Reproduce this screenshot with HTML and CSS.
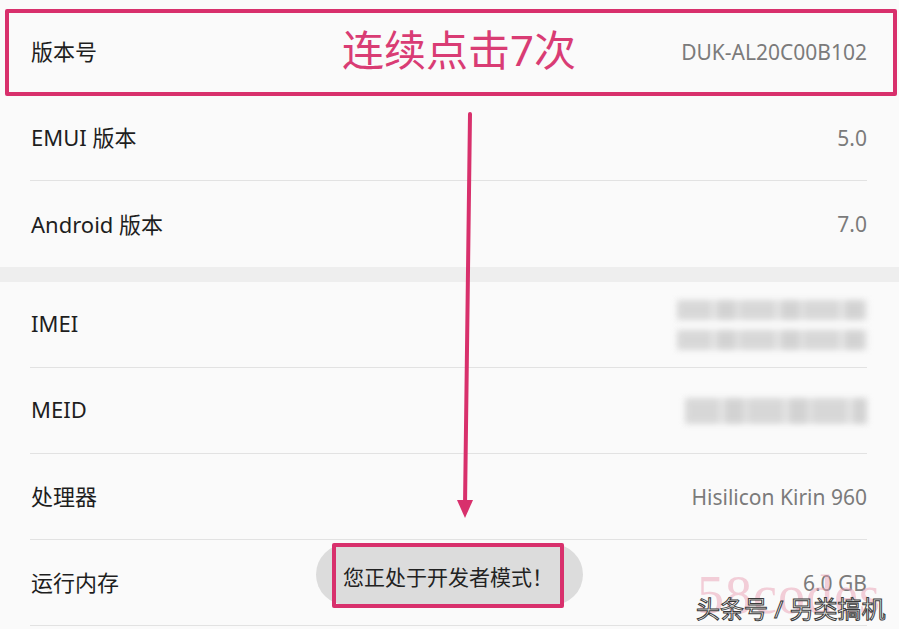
FILE: index.html
```html
<!DOCTYPE html>
<html lang="zh-CN">
<head>
  <meta charset="UTF-8">
  <meta name="viewport" content="width=device-width, initial-scale=1">
  <title>关于手机</title>
  <link rel="stylesheet" href="styles.css">
</head>

<body>
  <div class="page">
    <div class="group first">
      <div class="row">
        <span class="label">版本号</span>
        <span class="value">DUK-AL20C00B102</span>
      </div>
      <div class="row">
        <span class="label">EMUI 版本</span>
        <span class="value">5.0</span>
      </div>
      <div class="row last">
        <span class="label">Android 版本</span>
        <span class="value">7.0</span>
      </div>
    </div>

    <div class="gap"></div>

    <div class="group">
      <div class="row">
        <span class="label">IMEI</span>
        <span class="masked">
          <span class="smudge wide"></span>
          <span class="smudge wide"></span>
        </span>
      </div>
      <div class="row">
        <span class="label">MEID</span>
        <span class="masked">
          <span class="smudge thick"></span>
        </span>
      </div>
      <div class="row">
        <span class="label">处理器</span>
        <span class="value">Hisilicon Kirin 960</span>
      </div>
      <div class="row">
        <span class="label">运行内存</span>
        <span class="value">6.0 GB</span>
      </div>
    </div>

    <!-- annotations drawn over the screenshot -->
    <div class="mark-box"></div>
    <div class="mark-title">连续点击7次</div>

    <svg class="arrow" width="30" height="420" viewBox="0 0 30 420">
      <line x1="18" y1="2" x2="13" y2="394" stroke="#d8306c" stroke-width="4" stroke-linecap="round"/>
      <polygon points="5,388 21,388 13,406" fill="#d8306c"/>
    </svg>

    <div class="toast">
      <div class="toast-mark">您正处于开发者模式！</div>
    </div>

    <div class="watermark">
      <span class="wm-back">58codes</span>
      <span class="wm-front">头条号 / 另类搞机</span>
    </div>
  </div>
</body>
</html>
```

FILE: styles.css
```css
body {
  margin: 0;
  background: #fafafa;
  font-family: "Noto Sans", "Noto Sans CJK SC", sans-serif;
}
.page {
  position: relative;
  width: 899px;
  height: 629px;
  overflow: hidden;
}
.group.first {
  padding-top: 9px;
}
.row {
  height: 85px;
  margin: 0 32px 0 30px;
  padding-left: 1px;
  display: flex;
  align-items: center;
  justify-content: space-between;
  border-bottom: 1px solid #e2e2e2;
}
.row.last {
  border-bottom: none;
  height: 86px;
}
.label {
  font-size: 22px;
  color: #1e1e1e;
  margin-bottom: 3px;
}
.value {
  font-size: 21px;
  color: #7b7b7b;
}
.gap {
  height: 15px;
  background: #eeeeee;
}
.masked {
  display: flex;
  flex-direction: column;
  align-items: flex-end;
  gap: 10px;
}
.smudge {
  display: block;
  width: 182px;
  height: 20px;
  background: repeating-linear-gradient(90deg, #d2d2d2 0 34px, #e2e2e2 34px 40px, #cccccc 40px 58px, #dcdcdc 58px 64px);
  filter: blur(3px);
  opacity: 0.85;
}
.smudge.wide {
  width: 190px;
}
.smudge.thick {
  height: 26px;
}
.mark-box {
  position: absolute;
  left: 5px;
  top: 9px;
  width: 884px;
  height: 79px;
  border: 4px solid #d8306c;
  border-radius: 2px;
}
.mark-title {
  position: absolute;
  left: 342px;
  top: 23px;
  font-size: 42px;
  line-height: 54px;
  color: #d93c74;
}
.arrow {
  position: absolute;
  left: 452px;
  top: 112px;
}
.toast {
  position: absolute;
  left: 316px;
  top: 544px;
  width: 267px;
  height: 61px;
  border-radius: 31px;
  background: #dcdcdc;
}
.toast-mark {
  position: absolute;
  left: 16px;
  top: -1px;
  width: 224px;
  height: 57px;
  border: 4px solid #d8306c;
  border-radius: 2px;
  display: flex;
  align-items: center;
  justify-content: center;
  font-size: 21px;
  color: #222222;
}
.watermark {
  position: absolute;
  left: 694px;
  top: 568px;
  width: 200px;
  height: 61px;
}
.wm-back {
  position: absolute;
  left: 3px;
  top: -4px;
  font-family: "Liberation Serif", serif;
  font-size: 54px;
  letter-spacing: 1px;
  color: rgba(233, 160, 180, 0.5);
}
.wm-front {
  position: absolute;
  left: 2px;
  top: 22px;
  font-size: 24px;
  white-space: nowrap;
  color: #ffffff;
  -webkit-text-stroke: 1px #3a3a3a;
}
```
